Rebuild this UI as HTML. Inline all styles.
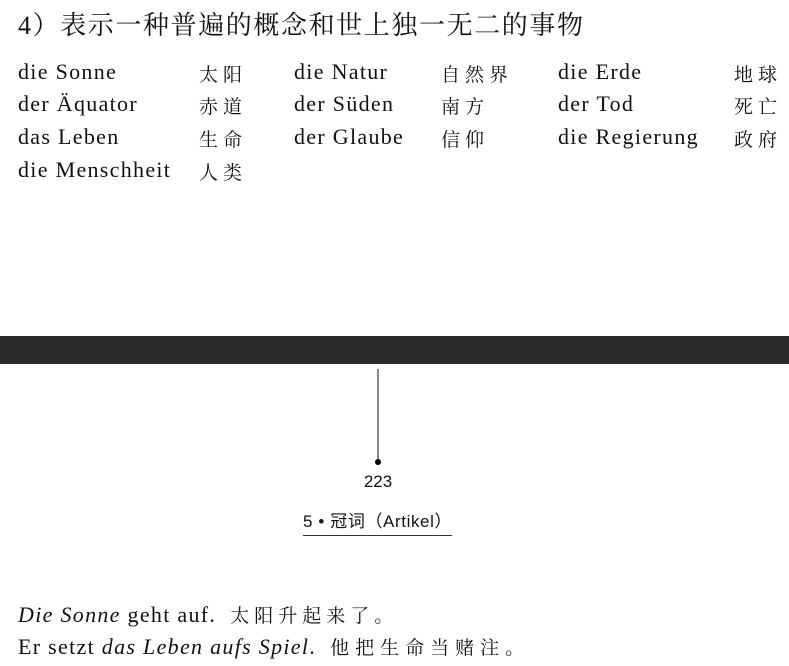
<!DOCTYPE html>
<html><head><meta charset="utf-8"><style>
body{margin:0;width:789px;height:666px;background:#fff;position:relative;overflow:hidden;font-family:"Liberation Serif","Noto Serif CJK SC",serif;color:#111}
.a{position:absolute;white-space:nowrap}
.w{font-size:22px;letter-spacing:1.3px}
.c{font-size:19px;letter-spacing:5px;font-family:"Noto Serif CJK SC","Liberation Serif",serif}
.s{font-family:"Liberation Sans","Noto Sans CJK SC",sans-serif}
</style></head><body>
<div class="a" style="left:18px;top:5px;font-size:26px;letter-spacing:1.6px;font-family:'Liberation Serif','Noto Serif CJK SC',serif">4）表示一种普遍的概念和世上独一无二的事物</div>

<div class="a w" style="left:18px;top:59px">die Sonne</div>
<div class="a w" style="left:18px;top:91px">der Äquator</div>
<div class="a w" style="left:18px;top:124px">das Leben</div>
<div class="a w" style="left:18px;top:157px">die Menschheit</div>
<div class="a c" style="left:199px;top:60px">太阳</div>
<div class="a c" style="left:199px;top:92px">赤道</div>
<div class="a c" style="left:199px;top:125px">生命</div>
<div class="a c" style="left:199px;top:158px">人类</div>

<div class="a w" style="left:294px;top:59px">die Natur</div>
<div class="a w" style="left:294px;top:91px">der Süden</div>
<div class="a w" style="left:294px;top:124px">der Glaube</div>
<div class="a c" style="left:441px;top:60px">自然界</div>
<div class="a c" style="left:441px;top:92px">南方</div>
<div class="a c" style="left:441px;top:125px">信仰</div>

<div class="a w" style="left:558px;top:59px">die Erde</div>
<div class="a w" style="left:558px;top:91px">der Tod</div>
<div class="a w" style="left:558px;top:124px">die Regierung</div>
<div class="a c" style="left:734px;top:60px">地球</div>
<div class="a c" style="left:734px;top:92px">死亡</div>
<div class="a c" style="left:734px;top:125px">政府</div>

<div class="a" style="left:0;top:336px;width:789px;height:28px;background:#2b2b2b"></div>
<div class="a" style="left:377px;top:369px;width:2px;height:92px;background:#888"></div>
<div class="a" style="left:375px;top:459px;width:6px;height:6px;border-radius:50%;background:#000"></div>
<div class="a s" style="left:358px;top:472px;font-size:17px;width:40px;text-align:center">223</div>
<div class="a s" style="left:303px;top:507px;font-size:17px;letter-spacing:0.6px;border-bottom:1px solid #333;padding-bottom:3px">5 • 冠词（Artikel）</div>

<div class="a w" style="left:18px;top:601px"><i>Die Sonne</i> geht auf.<span class="c" style="font-size:19px;letter-spacing:5px;margin-left:14px">太阳升起来了。</span></div>
<div class="a w" style="left:18px;top:633px">Er setzt <i>das Leben aufs Spiel</i>.<span class="c" style="font-size:19px;letter-spacing:6px;margin-left:14px">他把生命当赌注。</span></div>
</body></html>
